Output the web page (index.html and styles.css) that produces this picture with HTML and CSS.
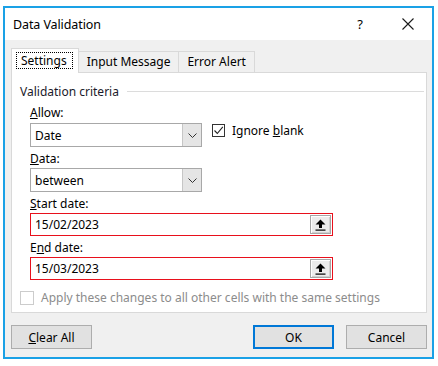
FILE: index.html
```html
<!DOCTYPE html>
<html lang="en">
<head>
  <meta charset="UTF-8">
  <meta name="viewport" content="width=device-width, initial-scale=1.0">
  <title>Data Validation</title>
  <link rel="stylesheet" href="styles.css">
</head>
<body>
  <div class="dialog">
    <div class="titlebar">
      <span class="title">Data Validation</span>
      <span class="help">?</span>
      <svg class="close" width="12" height="12" viewBox="0 0 12 12">
        <path d="M0.5 0.5 L11.5 11.5 M11.5 0.5 L0.5 11.5" stroke="#1a1a1a" stroke-width="1.1" fill="none"/>
      </svg>
    </div>

    <div class="body">
      <div class="tabs">
        <div class="tab active"><span class="focus">Settings</span></div>
        <div class="tab">Input Message</div>
        <div class="tab">Error Alert</div>
      </div>

      <div class="panel">
        <div class="group-title">
          <span>Validation criteria</span>
          <div class="rule"></div>
        </div>

        <div class="criteria">
          <div class="label first"><u>A</u>llow:</div>
          <div class="row">
            <div class="select">
              <span>Date</span>
              <div class="drop">
                <svg width="9" height="5" viewBox="0 0 9 5"><path d="M0.5 0.5 L4.5 4.5 L8.5 0.5" stroke="#333" fill="none"/></svg>
              </div>
            </div>
            <label class="check">
              <span class="box">
                <svg width="11" height="11" viewBox="0 0 11 11"><path d="M1.5 5.5 L4.3 8.5 L9.8 1.8" stroke="#222" stroke-width="1.1" fill="none"/></svg>
              </span>
              <span>Ignore <u>b</u>lank</span>
            </label>
          </div>

          <div class="label"><u>D</u>ata:</div>
          <div class="select">
            <span>between</span>
            <div class="drop">
              <svg width="9" height="5" viewBox="0 0 9 5"><path d="M0.5 0.5 L4.5 4.5 L8.5 0.5" stroke="#333" fill="none"/></svg>
            </div>
          </div>

          <div class="label"><u>S</u>tart date:</div>
          <div class="date">
            <span>15/02/2023</span>
            <div class="pick">
              <svg width="11" height="12" viewBox="0 0 11 12"><path d="M5.5 0.5 L10.5 5.5 L7 5.5 L7 9 L4 9 L4 5.5 L0.5 5.5 Z" fill="#000"/><rect x="0.5" y="10.5" width="10" height="1.2" fill="#000"/></svg>
            </div>
          </div>

          <div class="label">E<u>n</u>d date:</div>
          <div class="date">
            <span>15/03/2023</span>
            <div class="pick">
              <svg width="11" height="12" viewBox="0 0 11 12"><path d="M5.5 0.5 L10.5 5.5 L7 5.5 L7 9 L4 9 L4 5.5 L0.5 5.5 Z" fill="#000"/><rect x="0.5" y="10.5" width="10" height="1.2" fill="#000"/></svg>
            </div>
          </div>
        </div>

        <label class="apply">
          <span class="box disabled"></span>
          <span>Apply these changes to all other cells with the same settings</span>
        </label>
      </div>

      <div class="buttons">
        <button class="btn"><u>C</u>lear All</button>
        <div class="spacer"></div>
        <button class="btn default">OK</button>
        <button class="btn">Cancel</button>
      </div>
    </div>
  </div>
</body>
</html>
```

FILE: styles.css
```css
body {
  margin: 0;
  background: #ffffff;
  font-family: "Noto Sans", "Open Sans", sans-serif;
  font-size: 12px;
  color: #000;
}

.dialog {
  margin: 6px 0 0 3px;
  width: 427px;
  height: 349px;
  border: 2px solid #1aa1e6;
  background: #f0f0f0;
  display: flex;
  flex-direction: column;
}

.titlebar {
  height: 32px;
  background: #ffffff;
  display: flex;
  align-items: center;
  padding-left: 8px;
}

.title {
  flex: 1;
  font-size: 12.5px;
  letter-spacing: -0.1px;
}

.help {
  font-size: 13px;
  margin-right: 39px;
}

.close {
  margin-right: 18px;
}

.body {
  padding: 9px 5px 0 6px;
}

.tabs {
  display: flex;
  align-items: flex-end;
  height: 23px;
}

.tab {
  height: 20px;
  line-height: 20px;
  padding: 0 8px;
  border: 1px solid #d9d9d9;
  border-bottom: none;
  background: #f0f0f0;
  margin-left: -1px;
  white-space: nowrap;
}

.tab:first-child {
  margin-left: 0;
}

.tab.active {
  background: #ffffff;
  padding: 0 5px 0 4px;
  position: relative;
  z-index: 1;
  margin-bottom: -1px;
  height: 24px;
}

.focus {
  display: inline-block;
  margin-top: 3px;
  height: 15px;
  line-height: 15px;
  padding: 0 5px 0 4px;
  border: 1px dotted #000;
}

.panel {
  height: 229px;
  background: #ffffff;
  border: 1px solid #d9d9d9;
  padding: 10px 0 0 8px;
}

.group-title {
  display: flex;
  align-items: center;
  height: 16px;
  color: #1a1a2a;
}

.rule {
  flex: 1;
  height: 1px;
  background: #dcdcdc;
  margin: 1px 2px 0 8px;
}

.criteria {
  padding-left: 10px;
}

.label {
  height: 16px;
  line-height: 16px;
  margin-top: 4px;
  margin-bottom: 1px;
}

.label.first {
  margin-top: 6px;
  margin-bottom: 2px;
}

.row {
  display: flex;
  align-items: flex-start;
}

.select {
  width: 166px;
  height: 22px;
  border: 1px solid #a8a8a8;
  display: flex;
  align-items: center;
  padding-left: 4px;
}

.select span {
  flex: 1;
}

.drop {
  width: 18px;
  height: 22px;
  background: #e5e5e5;
  border-left: 1px solid #c6c6c6;
  display: flex;
  align-items: center;
  justify-content: center;
}

.check {
  display: flex;
  align-items: center;
  margin-left: 10px;
  gap: 7px;
  height: 14px;
}

.box {
  width: 11px;
  height: 11px;
  border: 1px solid #333;
  background: #fff;
  display: inline-flex;
  align-items: center;
  justify-content: center;
}

.box.disabled {
  border-color: #cccccc;
  width: 12px;
  height: 12px;
}

.date {
  width: 297px;
  height: 21px;
  border: 1px solid #e8101c;
  display: flex;
  align-items: center;
  padding-left: 4px;
}

.date span {
  flex: 1;
}

.pick {
  width: 19px;
  height: 17px;
  margin-right: 1px;
  background: #ececec;
  border: 1px solid #a6a6a6;
  box-shadow: inset 1px 1px 0 #ffffff, inset -1px -1px 0 #d0d0d0;
  display: flex;
  align-items: center;
  justify-content: center;
}

.apply {
  display: flex;
  align-items: center;
  gap: 7px;
  margin-top: 9px;
  color: #8c8c8c;
}

.buttons {
  display: flex;
  margin-top: 12px;
}

.spacer {
  flex: 1;
}

.btn {
  width: 81px;
  height: 24px;
  font-family: inherit;
  font-size: 12px;
  background: #e1e1e1;
  border: 1px solid #adadad;
  color: #000;
  padding: 0;
}

.btn.default {
  border: 2px solid #0078d7;
  margin-right: 12px;
}
```
